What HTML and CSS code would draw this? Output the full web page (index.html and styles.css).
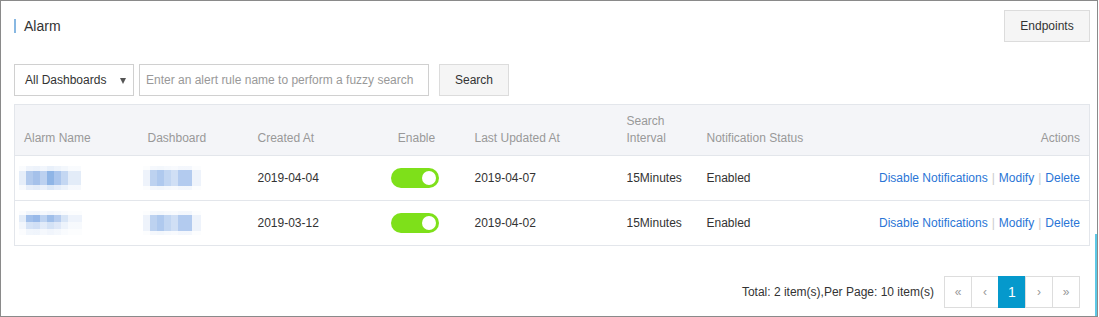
FILE: index.html
```html
<!DOCTYPE html>
<html lang="en">
<head>
    <meta charset="UTF-8">
    <meta name="viewport" content="width=device-width, initial-scale=1.0">
    <title>Alarm</title>
    <link rel="stylesheet" href="styles.css">
</head>
<body>
    <div class="page">
        <div class="head">
            <h2 class="title">Alarm</h2>
            <button class="btn btn-endpoints">Endpoints</button>
        </div>

        <div class="toolbar">
            <div class="select">All Dashboards<span class="caret"></span></div>
            <input class="search" type="text" placeholder="Enter an alert rule name to perform a fuzzy search">
            <button class="btn btn-search">Search</button>
        </div>

        <table class="grid">
            <colgroup>
                <col class="c-name">
                <col class="c-dash">
                <col class="c-created">
                <col class="c-enable">
                <col class="c-updated">
                <col class="c-interval">
                <col class="c-status">
                <col>
            </colgroup>
            <thead>
                <tr>
                    <th>Alarm Name</th>
                    <th>Dashboard</th>
                    <th>Created At</th>
                    <th class="center">Enable</th>
                    <th>Last Updated At</th>
                    <th>Search<br>Interval</th>
                    <th>Notification Status</th>
                    <th class="right">Actions</th>
                </tr>
            </thead>
            <tbody>
                <tr>
                    <td><span class="blur blur-a"></span></td>
                    <td><span class="blur blur-b"></span></td>
                    <td>2019-04-04</td>
                    <td class="center"><span class="switch"><span class="knob"></span></span></td>
                    <td>2019-04-07</td>
                    <td>15Minutes</td>
                    <td>Enabled</td>
                    <td class="right actions">
                        <a href="#">Disable Notifications</a><span class="sep">|</span><a href="#">Modify</a><span class="sep">|</span><a href="#">Delete</a>
                    </td>
                </tr>
                <tr>
                    <td><span class="blur blur-c"></span></td>
                    <td><span class="blur blur-b"></span></td>
                    <td>2019-03-12</td>
                    <td class="center"><span class="switch"><span class="knob"></span></span></td>
                    <td>2019-04-02</td>
                    <td>15Minutes</td>
                    <td>Enabled</td>
                    <td class="right actions">
                        <a href="#">Disable Notifications</a><span class="sep">|</span><a href="#">Modify</a><span class="sep">|</span><a href="#">Delete</a>
                    </td>
                </tr>
            </tbody>
        </table>

        <div class="footer">
            <span class="total">Total: 2 item(s),Per Page: 10 item(s)</span>
            <ul class="pager">
                <li>&laquo;</li>
                <li>&lsaquo;</li>
                <li class="active">1</li>
                <li>&rsaquo;</li>
                <li>&raquo;</li>
            </ul>
        </div>

        <span class="edge"></span>
    </div>
</body>
</html>
```

FILE: styles.css
```css
html, body {
    margin: 0;
    padding: 0;
    background-color: white;
}
body {
    font-family: "Liberation Sans", Arial, sans-serif;
    font-size: 12px;
    color: #333;
}
.page {
    position: relative;
    box-sizing: border-box;
    width: 1098px;
    height: 317px;
    border: 1px solid #8a8a8a;
    padding: 9px 7px 0 13px;
}
.head {
    display: flex;
    align-items: center;
    justify-content: space-between;
    height: 32px;
}
.title {
    margin: 0;
    font-size: 14px;
    font-weight: normal;
    color: #333;
    line-height: 14px;
    border-left: 2px solid #88b8e2;
    padding-left: 8px;
}
.btn {
    box-sizing: border-box;
    height: 32px;
    background-color: #f5f5f5;
    border: 1px solid #dcdcdc;
    border-radius: 0;
    color: #333;
    font-family: inherit;
    font-size: 12px;
    cursor: pointer;
    padding: 0;
}
.btn-endpoints {
    width: 86px;
}
.btn-search {
    width: 70px;
    margin-left: 10px;
}
.toolbar {
    display: flex;
    align-items: center;
    margin-top: 22px;
}
.select {
    box-sizing: border-box;
    position: relative;
    width: 120px;
    height: 32px;
    line-height: 30px;
    border: 1px solid #d0d0d0;
    padding-left: 10px;
    color: #333;
}
.caret {
    position: absolute;
    right: 7px;
    top: 13px;
    width: 0;
    height: 0;
    border-left: 3px solid transparent;
    border-right: 3px solid transparent;
    border-top: 6px solid #555;
}
.search {
    box-sizing: border-box;
    width: 290px;
    height: 32px;
    margin-left: 5px;
    border: 1px solid #d0d0d0;
    padding: 0 6px;
    font-family: inherit;
    font-size: 12px;
    color: #333;
    outline: none;
}
.search::placeholder {
    color: #999;
}
.grid {
    width: 1076px;
    margin-top: 8px;
    border-collapse: collapse;
    table-layout: fixed;
    border: 1px solid #e3e6eb;
}
.c-name { width: 124px; }
.c-dash { width: 110px; }
.c-created { width: 119px; }
.c-enable { width: 98px; }
.c-updated { width: 152px; }
.c-interval { width: 80px; }
.c-status { width: 160px; }
.grid th {
    background-color: #f4f5f8;
    color: #999;
    font-weight: normal;
    text-align: left;
    vertical-align: bottom;
    line-height: 17px;
    padding: 8px 9px 8px;
    border-bottom: 1px solid #e3e6eb;
}
.grid td {
    height: 44px;
    padding: 0 9px;
    border-bottom: 1px solid #e3e6eb;
    white-space: nowrap;
}
.grid .center {
    text-align: center;
}
.grid .right {
    text-align: right;
}
.actions a {
    color: #2a75d6;
    text-decoration: none;
}
.sep {
    color: #ccc;
    margin: 0 4px;
}
.switch {
    display: inline-block;
    position: relative;
    vertical-align: middle;
    width: 48px;
    height: 20px;
    margin-left: -4px;
    border-radius: 10px;
    background-color: #7ee01a;
}
.knob {
    position: absolute;
    right: 3px;
    top: 3px;
    width: 14px;
    height: 14px;
    border-radius: 50%;
    background-color: white;
}
.blur {
    display: inline-block;
    vertical-align: middle;
    height: 24px;
}
.blur-a {
    width: 62px;
    margin-left: -5px;
    background:
        linear-gradient(to bottom, rgba(255,255,255,.8) 0 5px, rgba(255,255,255,0) 5px 19px, rgba(255,255,255,.7) 19px),
        linear-gradient(90deg, #e6eef9 0 7px, #b2caed 7px 14px, #a5c1ea 14px 21px, #bcd1f0 21px 28px, #8fb5e6 28px 35px, #abc6ed 35px 42px, #c4d7f2 42px 49px, #e3ecf8 49px);
}
.blur-b {
    width: 58px;
    margin-left: -5px;
    background:
        linear-gradient(to bottom, rgba(255,255,255,.85) 0 4px, rgba(255,255,255,0) 4px 20px, rgba(255,255,255,.85) 20px),
        linear-gradient(90deg, #eef3fb 0 7px, #bdd2f0 7px 14px, #afc9ee 14px 21px, #c2d6f2 21px 28px, #d0dff5 28px 35px, #b3cbef 35px 49px, #eef3fb 49px);
}
.blur-c {
    width: 63px;
    margin-left: -5px;
    background:
        linear-gradient(to bottom, rgba(255,255,255,.85) 0 4px, rgba(255,255,255,0) 4px 11px, rgba(255,255,255,.55) 11px 18px, rgba(255,255,255,.85) 18px),
        linear-gradient(90deg, #e3ecf8 0 7px, #a2c0eb 7px 14px, #98b9e9 14px 21px, #bed3f1 21px 28px, #a0bfea 28px 35px, #b7cdef 35px 42px, #d8e5f6 42px 49px, #eef3fb 49px);
}
.footer {
    display: flex;
    align-items: center;
    justify-content: flex-end;
    margin-top: 30px;
    padding-right: 10px;
}
.total {
    color: #333;
    margin-right: 10px;
}
.pager {
    display: flex;
    list-style: none;
    margin: 0;
    padding: 0;
}
.pager li {
    box-sizing: border-box;
    width: 28px;
    height: 32px;
    line-height: 30px;
    text-align: center;
    border: 1px solid #ddd;
    margin-left: -1px;
    color: #999;
    font-size: 12px;
}
.pager li:first-child {
    margin-left: 0;
}
.pager li.active {
    background-color: #0599cc;
    border-color: #0599cc;
    color: white;
    font-size: 14px;
}
.edge {
    position: absolute;
    right: 0;
    top: 233px;
    bottom: 0;
    width: 2px;
    background-color: #5cc8e6;
}
```
